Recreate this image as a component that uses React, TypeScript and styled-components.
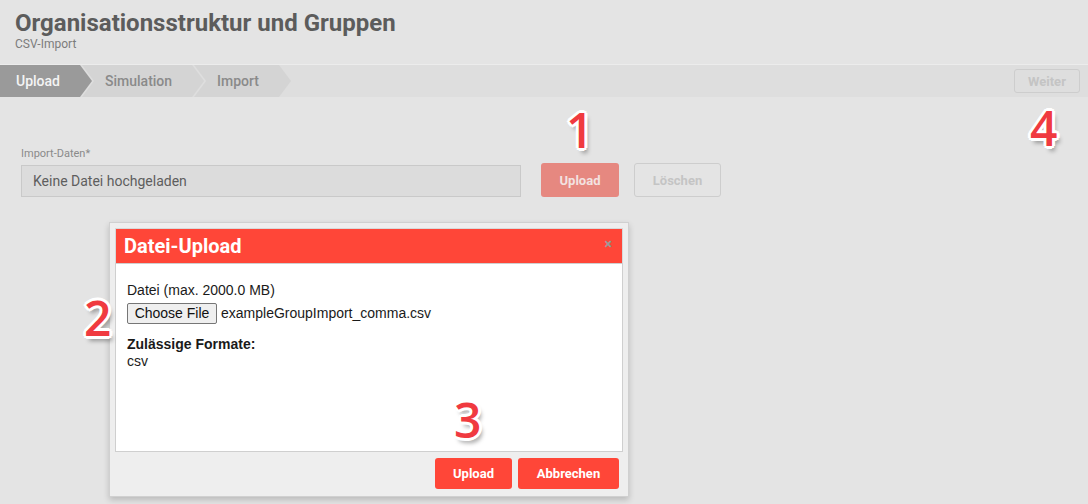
import React from 'react'
import styled, { createGlobalStyle } from 'styled-components'

const GlobalStyle = createGlobalStyle`
  html, body {
    margin: 0;
    padding: 0;
    background: #e4e4e4;
    font-family: Roboto, "Liberation Sans", Arial, sans-serif;
  }
`

const Page = styled.div`
  position: relative;
  width: 1088px;
  height: 504px;
  overflow: hidden;
  background: #e4e4e4;
`

const Header = styled.div`
  height: 65px;
  box-sizing: border-box;
  padding: 9px 15px 0;
  border-bottom: 1px solid #ececec;
`

const Title = styled.h1`
  margin: 0;
  font-size: 24px;
  line-height: 28px;
  font-weight: 700;
  color: #5c5c5c;
`

const Subtitle = styled.div`
  font-size: 12px;
  line-height: 15px;
  color: #7c7c7c;
`

const Toolbar = styled.div`
  height: 32px;
  display: flex;
  justify-content: space-between;
  align-items: center;
  padding-right: 8px;
  background: #dedede;
`

const Steps = styled.div`
  display: flex;
  height: 100%;
`

const Step = styled.div<{ $active?: boolean; $first?: boolean }>`
  display: flex;
  align-items: center;
  height: 100%;
  box-sizing: border-box;
  padding: 0 32px 0 ${p => (p.$first ? '16px' : '23px')};
  margin-left: ${p => (p.$first ? '0' : '-10px')};
  font-size: 14px;
  font-weight: 500;
  color: ${p => (p.$active ? '#f4f4f4' : '#8a8a8a')};
  background: ${p => (p.$active ? '#9a9a9a' : '#d4d4d4')};
  clip-path: ${p =>
    p.$first
      ? 'polygon(0 0, calc(100% - 12px) 0, 100% 50%, calc(100% - 12px) 100%, 0 100%)'
      : 'polygon(0 0, calc(100% - 12px) 0, 100% 50%, calc(100% - 12px) 100%, 0 100%, 12px 50%)'};
`

const GhostButton = styled.button<{ $w: number; $h: number }>`
  width: ${p => p.$w}px;
  height: ${p => p.$h}px;
  box-sizing: border-box;
  border: 1px solid #cdcdcd;
  border-radius: 3px;
  background: transparent;
  color: #c4c4c4;
  font-family: Roboto, sans-serif;
  font-size: 13px;
  font-weight: 700;
  padding: 0;
`

const Form = styled.div`
  display: flex;
  align-items: flex-end;
  padding: 50px 21px 0;
  gap: 15px;
`

const Field = styled.div`
  width: 500px;
  margin-right: 5px;
`

const Label = styled.div`
  font-size: 11px;
  line-height: 14px;
  color: #8a8a8a;
  margin-bottom: 4px;
`

const Input = styled.div`
  height: 32px;
  box-sizing: border-box;
  border: 1px solid #c9c9c9;
  background: #dcdcdc;
  color: #5e5e5e;
  font-size: 14px;
  display: flex;
  align-items: center;
  padding-left: 11px;
`

const RedButton = styled.button<{ $w: number; $h: number; $faded?: boolean }>`
  width: ${p => p.$w}px;
  height: ${p => p.$h}px;
  border: none;
  border-radius: 3px;
  background: ${p => (p.$faded ? '#e68880' : '#ff4638')};
  color: ${p => (p.$faded ? '#f3e2e0' : '#ffffff')};
  font-family: Roboto, sans-serif;
  font-size: 13px;
  font-weight: 700;
  padding: 0;
`

const Dialog = styled.div`
  position: absolute;
  left: 109px;
  top: 222px;
  width: 520px;
  height: 275px;
  box-sizing: border-box;
  padding: 5px;
  background: #eeeeee;
  border: 1px solid #d0d0d0;
  box-shadow: 0 3px 6px rgba(0, 0, 0, 0.18);
  display: flex;
  flex-direction: column;
`

const DialogHead = styled.div`
  height: 34px;
  background: #ff4638;
  display: flex;
  align-items: center;
  justify-content: space-between;
  padding: 0 10px 0 8px;
  border: 1px solid #d8d8d8;
  border-bottom: none;
`

const DialogTitle = styled.div`
  color: #fff;
  font-size: 20px;
  font-weight: 700;
`

const Close = styled.span`
  color: #9a9a9a;
  font-size: 14px;
  font-weight: 700;
  margin-top: -4px;
`

const DialogBody = styled.div`
  height: 189px;
  box-sizing: border-box;
  background: #fff;
  border: 1px solid #cfcfcf;
  padding: 18px 11px;
  font-family: "Liberation Sans", Arial, sans-serif;
  font-size: 14px;
  color: #1a1a1a;
  line-height: 17px;
`

const FileRow = styled.div`
  display: flex;
  align-items: center;
  gap: 4px;
  margin: 4px 0 12px;
`

const FileButton = styled.span`
  display: inline-block;
  width: 90px;
  height: 21px;
  box-sizing: border-box;
  border: 1px solid #767676;
  border-radius: 2px;
  background: #efefef;
  font-size: 14px;
  line-height: 19px;
  text-align: center;
  color: #111;
`

const Strong = styled.div`
  font-weight: 700;
`

const DialogFoot = styled.div`
  display: flex;
  justify-content: flex-end;
  gap: 6px;
  padding: 6px 4px 0 0;
`

const Marker = styled.span<{ $x: number; $y: number }>`
  position: absolute;
  left: ${p => p.$x}px;
  top: ${p => p.$y}px;
  font-family: "Open Sans", sans-serif;
  font-size: 48px;
  font-weight: 600;
  line-height: 1;
  color: #f03a40;
  text-shadow:
    -3px 0 0 #fff, 3px 0 0 #fff, 0 -3px 0 #fff, 0 3px 0 #fff,
    -2px -2px 0 #fff, 2px -2px 0 #fff, -2px 2px 0 #fff, 2px 2px 0 #fff,
    3px 5px 4px rgba(0, 0, 0, 0.35);
`

export default function App() {
  return (
    <Page>
      <GlobalStyle />
      <Header>
        <Title>Organisationsstruktur und Gruppen</Title>
        <Subtitle>CSV-Import</Subtitle>
      </Header>
      <Toolbar>
        <Steps>
          <Step $first $active>Upload</Step>
          <Step>Simulation</Step>
          <Step>Import</Step>
        </Steps>
        <GhostButton $w={66} $h={24}>Weiter</GhostButton>
      </Toolbar>
      <Form>
        <Field>
          <Label>Import-Daten*</Label>
          <Input>Keine Datei hochgeladen</Input>
        </Field>
        <RedButton $faded $w={78} $h={34}>Upload</RedButton>
        <GhostButton $w={87} $h={34}>Löschen</GhostButton>
      </Form>

      <Dialog>
        <DialogHead>
          <DialogTitle>Datei-Upload</DialogTitle>
          <Close>×</Close>
        </DialogHead>
        <DialogBody>
          <div>Datei (max. 2000.0 MB)</div>
          <FileRow>
            <FileButton>Choose File</FileButton>
            <span>exampleGroupImport_comma.csv</span>
          </FileRow>
          <Strong>Zulässige Formate:</Strong>
          <div>csv</div>
        </DialogBody>
        <DialogFoot>
          <RedButton $w={77} $h={31}>Upload</RedButton>
          <RedButton $w={101} $h={31}>Abbrechen</RedButton>
        </DialogFoot>
      </Dialog>

      <Marker $x={566} $y={106}>1</Marker>
      <Marker $x={84} $y={294}>2</Marker>
      <Marker $x={454} $y={396}>3</Marker>
      <Marker $x={1030} $y={104}>4</Marker>
    </Page>
  )
}
